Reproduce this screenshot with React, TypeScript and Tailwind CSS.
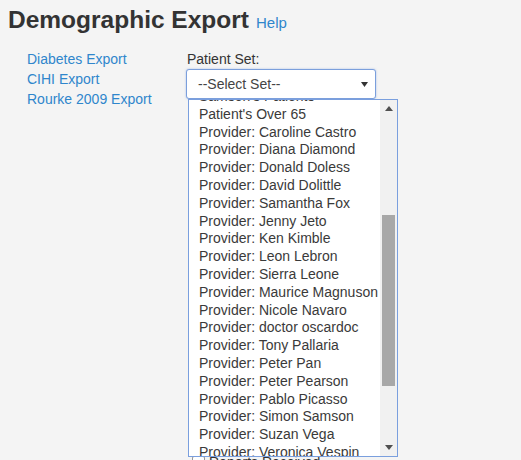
import React from 'react';

const providers = [
    'Caroline Castro',
    'Diana Diamond',
    'Donald Doless',
    'David Dolittle',
    'Samantha Fox',
    'Jenny Jeto',
    'Ken Kimble',
    'Leon Lebron',
    'Sierra Leone',
    'Maurice Magnuson',
    'Nicole Navaro',
    'doctor oscardoc',
    'Tony Pallaria',
    'Peter Pan',
    'Peter Pearson',
    'Pablo Picasso',
    'Simon Samson',
    'Suzan Vega',
    'Veronica Vespin',
    'Walter White',
];

const options = ["Samson's Patients", "Patient's Over 65", ...providers.map((p) => `Provider: ${p}`)];

const exportLinks = ['Diabetes Export', 'CIHI Export', 'Rourke 2009 Export'];

const SetDropdown: React.FC = () => (
    <div className="absolute left-[1px] top-[30px] z-10 flex h-[358px] w-[210px] overflow-hidden border border-[#7a9fde] bg-white">
        <div className="flex-1 overflow-hidden">
            <div className="-mt-[12px]">
                {options.map((o) => (
                    <div key={o} className="h-[17.8px] whitespace-nowrap pl-[10px] text-[14px] leading-[17.8px] text-[#3a3a3a]">
                        {o}
                    </div>
                ))}
            </div>
        </div>
        {/* scrollbar */}
        <div className="flex w-[17px] flex-col items-center bg-[#f1f1f1]">
            <div className="flex h-[17px] w-full items-center justify-center">
                <svg width="8" height="5" viewBox="0 0 8 5"><path d="M0 5 L4 0 L8 5 Z" fill="#505050" /></svg>
            </div>
            <div className="mt-[98px] h-[171px] w-[13px] bg-[#a8a8a8]" />
            <div className="flex-1" />
            <div className="flex h-[17px] w-full items-center justify-center">
                <svg width="8" height="5" viewBox="0 0 8 5"><path d="M0 0 L4 5 L8 0 Z" fill="#505050" /></svg>
            </div>
        </div>
    </div>
);

export default function App() {
    return (
        <div className="h-[460px] w-[521px] overflow-hidden bg-[#f4f4f4] font-['Liberation_Sans',Arial,sans-serif] text-[#333]">
            <div className="flex items-baseline px-[8px] pt-[4px]">
                <h1 className="text-[24.5px] font-bold leading-[32px] text-[#333]">Demographic Export</h1>
                <a className="ml-[7px] text-[15px] text-[#2f86cc]">Help</a>
            </div>

            <div className="mt-[13px] flex">
                <div className="ml-[27px] w-[160px] flex-col">
                    {exportLinks.map((l) => (
                        <a key={l} className="block text-[14px] leading-[20px] text-[#2f86cc]">{l}</a>
                    ))}
                </div>

                <div className="flex flex-col">
                    <div className="text-[14px] leading-[20px] text-[#333]">Patient Set:</div>
                    <div className="relative">
                        <div className="-ml-[1px] flex h-[30px] w-[190px] items-center justify-between rounded-[3px] border border-[#7b9fdc] bg-white pl-[11px] pr-[7px] text-[14px] text-[#444] shadow-[0_0_2px_rgba(80,130,220,0.5)]">
                            <span>--Select Set--</span>
                            <svg width="7" height="5" viewBox="0 0 7 5"><path d="M0 0 L3.5 5 L7 0 Z" fill="#333" /></svg>
                        </div>
                        <SetDropdown />
                    </div>
                    <div className="mt-[353px] flex items-center gap-[4px] pl-[5px] text-[14px] leading-[20px]">
                        <span className="inline-block h-[13px] w-[13px] rounded-[2px] border border-[#999] bg-white" />
                        <span>Reports Received</span>
                    </div>
                </div>
            </div>
        </div>
    );
}
